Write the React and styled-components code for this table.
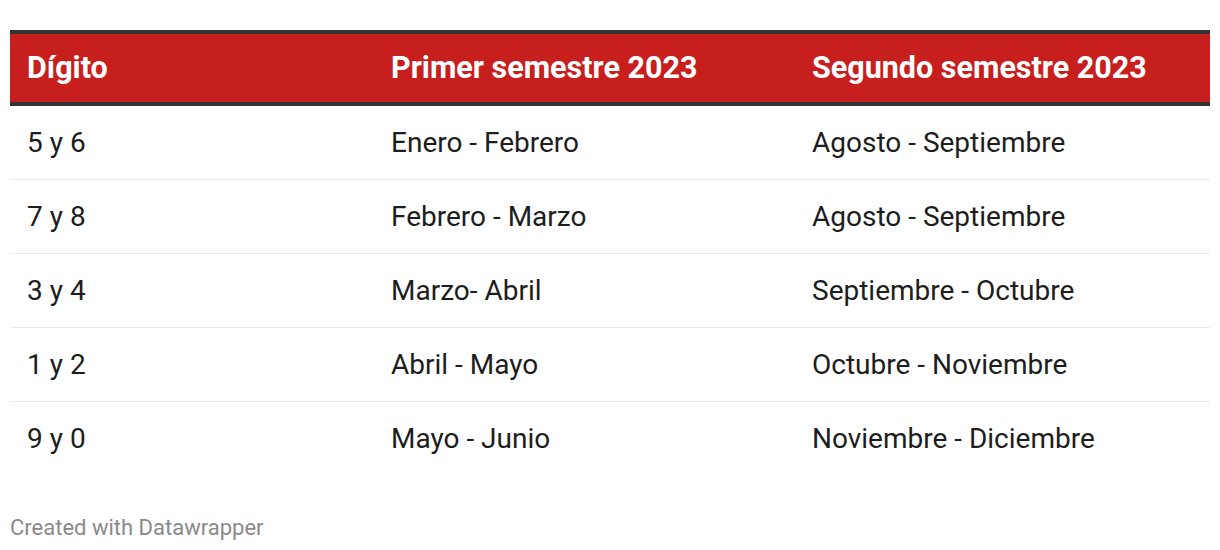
import React from "react";
import styled, { createGlobalStyle } from "styled-components";

const Global = createGlobalStyle`
  html, body { margin: 0; padding: 0; background: #fff; }
  body { font-family: Roboto, "Liberation Sans", sans-serif; }
`;

const Page = styled.div`
  padding: 30px 10px 0 10px;
  width: 1200px;
`;

const Table = styled.table`
  width: 1200px;
  border-collapse: collapse;
  table-layout: fixed;
`;

const HeadCell = styled.th`
  background: #c71e1e;
  color: #fff;
  font-weight: 700;
  font-size: 30.5px;
  text-align: left;
  height: 68px;
  padding: 0 0 0 17px;
  border-top: 4px solid #333333;
  border-bottom: 4px solid #333333;
  box-sizing: content-box;
  line-height: 1;
`;

const Row = styled.tr`
  & + & td { border-top: 1px solid #ebebeb; }
`;

const Cell = styled.td`
  color: #1d1d1d;
  font-size: 28px;
  line-height: 1;
  height: 73px;
  padding: 0 0 0 17px;
  vertical-align: middle;
`;

const Footer = styled.div`
  margin-top: 40px;
  color: #8a8a8a;
  font-size: 22px;
  line-height: 1.2;
`;

const cols = [
  { label: "Dígito", w: 364 },
  { label: "Primer semestre 2023", w: 421 },
  { label: "Segundo semestre 2023", w: 415 },
];

const rows = [
  ["5 y 6", "Enero - Febrero", "Agosto - Septiembre"],
  ["7 y 8", "Febrero - Marzo", "Agosto - Septiembre"],
  ["3 y 4", "Marzo- Abril", "Septiembre - Octubre"],
  ["1 y 2", "Abril - Mayo", "Octubre - Noviembre"],
  ["9 y 0", "Mayo - Junio", "Noviembre - Diciembre"],
];

export default function App() {
  return (
    <>
      <Global />
      <Page>
        <Table>
          <colgroup>
            {cols.map((c) => (
              <col key={c.label} style={{ width: c.w }} />
            ))}
          </colgroup>
          <thead>
            <tr>
              {cols.map((c) => (
                <HeadCell key={c.label}>{c.label}</HeadCell>
              ))}
            </tr>
          </thead>
          <tbody>
            {rows.map((r) => (
              <Row key={r[0]}>
                {r.map((v, i) => (
                  <Cell key={i}>{v}</Cell>
                ))}
              </Row>
            ))}
          </tbody>
        </Table>
        <Footer>Created with Datawrapper</Footer>
      </Page>
    </>
  );
}
